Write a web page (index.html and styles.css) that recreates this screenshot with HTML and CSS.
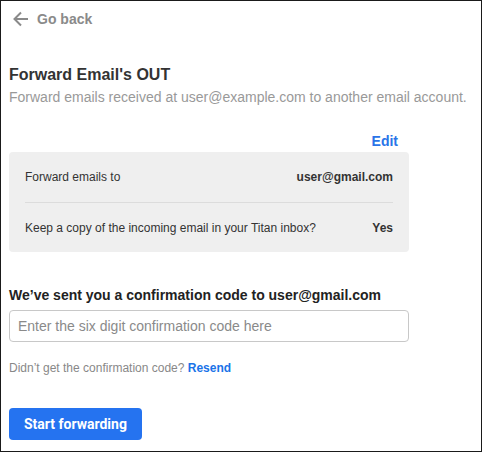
FILE: index.html
```html
<!DOCTYPE html>
<html>
<head>
<meta charset="utf-8">
<link rel="stylesheet" href="styles.css">
</head>
<body>
<div class="frame">
  <a class="back" href="#">
    <svg class="back-icon" width="18" height="18" viewBox="0 0 18 18"><path d="M16 9H3M9 2.5L2.5 9L9 15.5" fill="none" stroke="#8a8a8a" stroke-width="2"/></svg>
    <span>Go back</span>
  </a>
  <h1 class="title">Forward Email's OUT</h1>
  <p class="subtitle">Forward emails received at user@example.com to another email account.</p>
  <div class="panel-wrap">
    <div class="edit-row"><a class="edit" href="#">Edit</a></div>
    <div class="panel">
      <div class="row"><span>Forward emails to</span><strong>user@gmail.com</strong></div>
      <div class="row"><span>Keep a copy of the incoming email in your Titan inbox?</span><strong>Yes</strong></div>
    </div>
  </div>
  <h2 class="sent">We’ve sent you a confirmation code to user@gmail.com</h2>
  <input class="code" type="text" placeholder="Enter the six digit confirmation code here">
  <p class="resend">Didn’t get the confirmation code? <a href="#">Resend</a></p>
  <button class="start">Start forwarding</button>
</div>
</body>
</html>
```
FILE: styles.css
```css
html, body { margin: 0; padding: 0; }
body { font-family: "Liberation Sans", Arial, sans-serif; background: #fff; }
.frame {
  box-sizing: border-box;
  width: 482px;
  height: 452px;
  border: 1px solid #1a1a1a;
  padding: 0 8px;
  display: flex;
  flex-direction: column;
  align-items: flex-start;
}
.back {
  display: flex;
  align-items: center;
  gap: 7px;
  margin-top: 8px;
  margin-left: 3px;
  height: 20px;
  text-decoration: none;
  color: #8a8a8a;
  font-weight: bold;
  font-size: 14px;
}
.back-icon { display: block; }
.title {
  margin: 36px 0 0;
  font-size: 16px;
  line-height: 20px;
  color: #333;
  font-weight: bold;
}
.subtitle {
  margin: 3px 0 0;
  font-size: 14px;
  line-height: 18px;
  color: #999;
}
.panel-wrap { width: 400px; margin-top: 26px; }
.edit-row { display: flex; justify-content: flex-end; padding-right: 11px; }
.edit {
  color: #2a74e8;
  font-weight: bold;
  font-size: 14px;
  line-height: 18px;
  text-decoration: none;
}
.panel {
  margin-top: 2px;
  background: #efefef;
  border-radius: 4px;
  padding: 0 16px;
}
.row {
  display: flex;
  justify-content: space-between;
  align-items: center;
  height: 50px;
  font-size: 12px;
  color: #333;
}
.row + .row { border-top: 1px solid #dcdcdc; height: 49px; }
.row strong { color: #333; }
.sent {
  margin: 34px 0 0;
  font-size: 14px;
  line-height: 18px;
  font-weight: bold;
  color: #222;
}
.code {
  box-sizing: border-box;
  width: 400px;
  height: 32px;
  margin-top: 6px;
  border: 1px solid #c8c8c8;
  border-radius: 4px;
  padding: 0 8px;
  font-family: "Liberation Sans", Arial, sans-serif;
  font-size: 14px;
  color: #333;
  outline: none;
}
.code::placeholder { color: #8a8a8a; }
.resend {
  margin: 18px 0 0;
  font-size: 12px;
  line-height: 16px;
  color: #888;
}
.resend a { color: #1a73e8; font-weight: bold; text-decoration: none; }
.start {
  margin-top: 32px;
  height: 32px;
  padding: 0 15px;
  background: #2573f0;
  color: #fff;
  border: none;
  border-radius: 4px;
  font-family: Roboto, "Liberation Sans", sans-serif;
  font-weight: bold;
  font-size: 14px;
}
```
